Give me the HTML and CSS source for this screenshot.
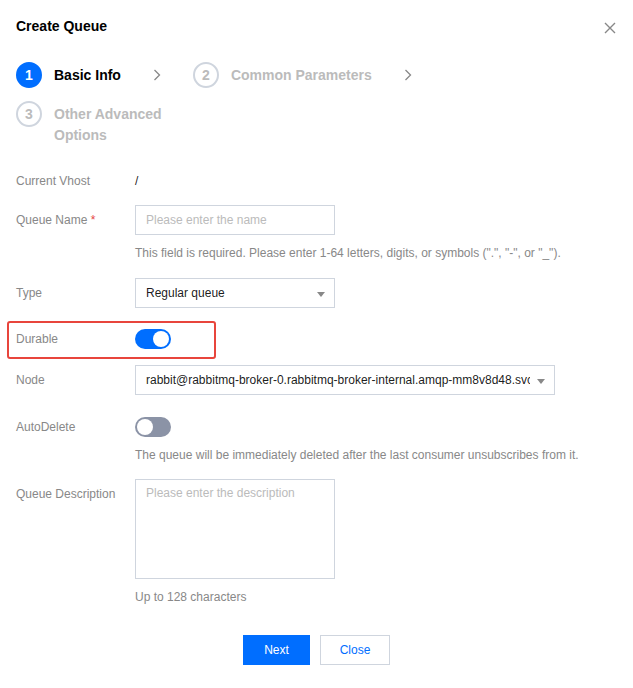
FILE: index.html
```html
<!DOCTYPE html>
<html>
<head>
<meta charset="utf-8">
<link rel="stylesheet" href="styles.css">
</head>
<body>
<div class="dialog">
  <div class="header">
    <h1 class="title">Create Queue</h1>
    <button class="close-btn" aria-label="Close">
      <svg width="12" height="12" viewBox="0 0 12 12"><path d="M1 1L11 11M11 1L1 11" stroke="#888" stroke-width="1.4" fill="none"/></svg>
    </button>
  </div>

  <div class="steps">
    <div class="step active">
      <span class="step-num">1</span>
      <span class="step-text">Basic Info</span>
      <svg class="step-arrow" width="8" height="12" viewBox="0 0 8 12"><path d="M1.5 1L6.5 6L1.5 11" stroke="#888" stroke-width="1.3" fill="none"/></svg>
    </div>
    <div class="step">
      <span class="step-num">2</span>
      <span class="step-text">Common Parameters</span>
      <svg class="step-arrow" width="8" height="12" viewBox="0 0 8 12"><path d="M1.5 1L6.5 6L1.5 11" stroke="#888" stroke-width="1.3" fill="none"/></svg>
    </div>
    <div class="step-break"></div>
    <div class="step step-second-line">
      <span class="step-num">3</span>
      <span class="step-text narrow">Other Advanced Options</span>
    </div>
  </div>

  <div class="form">
    <div class="row row-vhost">
      <div class="label">Current Vhost</div>
      <div class="control"><span class="value">/</span></div>
    </div>

    <div class="row row-name">
      <div class="label label-ctl">Queue Name <span class="req">*</span></div>
      <div class="control">
        <div class="input"><span class="placeholder">Please enter the name</span></div>
        <div class="help">This field is required. Please enter 1-64 letters, digits, or symbols (".", "-", or "_").</div>
      </div>
    </div>

    <div class="row row-type">
      <div class="label label-ctl">Type</div>
      <div class="control">
        <div class="select"><span class="select-text">Regular queue</span><span class="caret"></span></div>
      </div>
    </div>

    <div class="row row-durable">
      <div class="label label-ctl">Durable</div>
      <div class="control control-switch">
        <span class="switch on"><span class="knob"></span></span>
      </div>
      <span class="highlight"></span>
    </div>

    <div class="row row-node">
      <div class="label label-ctl">Node</div>
      <div class="control">
        <div class="select select-wide"><span class="select-text">rabbit@rabbitmq-broker-0.rabbitmq-broker-internal.amqp-mm8v8d48.svc.cluster.local</span><span class="caret"></span></div>
      </div>
    </div>

    <div class="row row-auto">
      <div class="label">AutoDelete</div>
      <div class="control">
        <span class="switch"><span class="knob"></span></span>
        <div class="help">The queue will be immediately deleted after the last consumer unsubscribes from it.</div>
      </div>
    </div>

    <div class="row row-desc">
      <div class="label label-area">Queue Description</div>
      <div class="control">
        <div class="textarea"><span class="placeholder">Please enter the description</span></div>
        <div class="help">Up to 128 characters</div>
      </div>
    </div>
  </div>

  <div class="footer">
    <button class="btn btn-primary">Next</button>
    <button class="btn btn-weak">Close</button>
  </div>
</div>
</body>
</html>
```

FILE: styles.css
```css
* { box-sizing: border-box; }
html, body { margin: 0; padding: 0; background: #fff; }
body {
  font-family: "Liberation Sans", Arial, sans-serif;
  font-size: 12px;
  color: rgba(0,0,0,0.9);
}
.dialog {
  width: 633px;
  height: 688px;
  padding: 16px 16px 0 16px;
}
.header {
  display: flex;
  justify-content: space-between;
  align-items: center;
  height: 20px;
}
.title {
  margin: 0;
  font-size: 14px;
  font-weight: bold;
  line-height: 20px;
  color: #000;
}
.close-btn {
  border: 0;
  background: none;
  padding: 0;
  width: 12px;
  height: 12px;
  margin-right: 1px;
  margin-top: 4px;
  display: flex;
}

/* steps */
.steps {
  display: flex;
  flex-wrap: wrap;
  margin-top: 26px;
}
.step-break { flex-basis: 100%; height: 0; }
.step {
  display: flex;
  align-items: flex-start;
}
.step-second-line { margin-top: 13px; }
.step-num {
  flex: none;
  width: 26px;
  height: 26px;
  border-radius: 50%;
  border: 2px solid #cfd5de;
  color: #bbb;
  font-size: 14px;
  font-weight: bold;
  display: flex;
  align-items: center;
  justify-content: center;
}
.step.active .step-num {
  background: #006eff;
  border-color: #006eff;
  color: #fff;
}
.step-text {
  margin-left: 12px;
  font-size: 14px;
  font-weight: bold;
  line-height: 21px;
  padding-top: 3px;
  color: #bbb;
}
.step.active .step-text { color: #000; }
.step-text.narrow { width: 120px; }
.step-arrow {
  margin: 7px 32px 0 32px;
  flex: none;
}

/* form */
.row {
  display: flex;
  position: relative;
}
.label {
  width: 119px;
  flex: none;
  color: #888;
  line-height: 20px;
}
.label-ctl { line-height: 30px; }
.label-area { padding-top: 5px; }
.req { color: #e54545; }
.control { flex: 1; min-width: 0; }
.value { line-height: 20px; display: block; }

.row-vhost { margin-top: 25px; }
.row-name { margin-top: 14px; }
.row-type { margin-top: 15px; }
.row-durable { margin-top: 16px; }
.row-node { margin-top: 11px; }
.row-auto { margin-top: 22px; }
.row-desc { margin-top: 14px; }

.input, .select, .textarea {
  border: 1px solid #cfd5de;
  height: 30px;
  width: 200px;
  padding: 0 10px;
  display: flex;
  align-items: center;
  background: #fff;
}
.placeholder { color: #bbb; }
.select { position: relative; padding-right: 24px; }
.select-wide { width: 420px; }
.select-text {
  white-space: nowrap;
  overflow: hidden;
  color: rgba(0,0,0,0.9);
}
.caret {
  position: absolute;
  right: 9px;
  top: 13px;
  width: 0;
  height: 0;
  border-left: 4px solid transparent;
  border-right: 4px solid transparent;
  border-top: 5px solid #888;
}
.textarea {
  height: 100px;
  align-items: flex-start;
  padding-top: 6px;
}
.help {
  margin-top: 8px;
  line-height: 20px;
  color: #888;
  white-space: nowrap;
}

.control-switch {
  display: flex;
  align-items: center;
}
.switch {
  display: block;
  width: 36px;
  height: 20px;
  border-radius: 10px;
  background: #8b93a6;
  position: relative;
}
.switch .knob {
  position: absolute;
  top: 2px;
  left: 2px;
  width: 16px;
  height: 16px;
  border-radius: 50%;
  background: #fff;
}
.switch.on { background: #006eff; }
.switch.on .knob { left: 18px; }

.highlight {
  position: absolute;
  left: -9px;
  top: -3px;
  width: 209px;
  height: 38px;
  border: 2px solid #e8453c;
  border-radius: 3px;
  pointer-events: none;
}

/* footer */
.footer {
  display: flex;
  justify-content: center;
  gap: 10px;
  margin-top: 28px;
}
.btn {
  height: 30px;
  font-family: inherit;
  font-size: 12px;
  padding: 0;
  cursor: pointer;
}
.btn-primary {
  width: 67px;
  background: #006eff;
  color: #fff;
  border: 0;
}
.btn-weak {
  width: 70px;
  background: #fff;
  color: #006eff;
  border: 1px solid #cfd5de;
}
```
